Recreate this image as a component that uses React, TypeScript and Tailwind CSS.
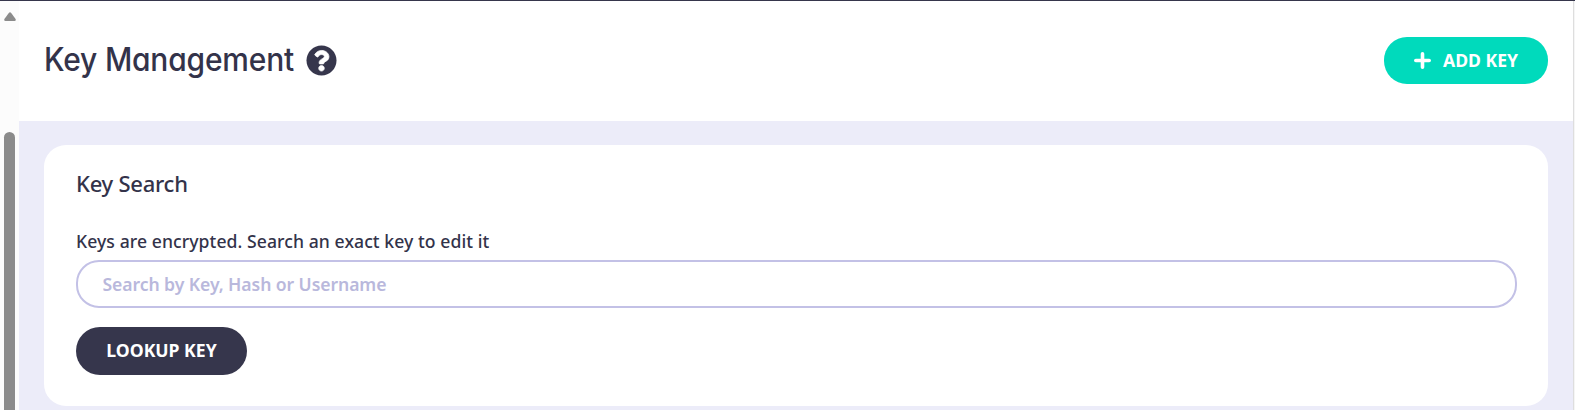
import React from "react";

function Scrollbar() {
  return (
    <div className="flex w-[19px] shrink-0 flex-col items-center bg-[#fcfcfc] pt-[11px]">
      <svg width="12" height="9" viewBox="0 0 12 9" className="shrink-0">
        <path d="M4.8 1Q6-.6 7.2 1L11.6 7Q12.2 9 10.6 9H1.4Q-.2 9 .4 7Z" fill="#8b8b8b" />
      </svg>
      <div className="mt-[111px] w-[11px] flex-1 rounded-t-full bg-[#8b8b8b]" />
    </div>
  );
}

function HelpIcon() {
  return (
    <svg width="31" height="31" viewBox="0 0 512 512" className="shrink-0">
      <path
        fill="#36364c"
        d="M504 256c0 136.997-111.043 248-248 248S8 392.997 8 256C8 119.083 119.043 8 256 8s248 111.083 248 248z"
      />
      <path
        fill="#fff"
        stroke="#fff"
        strokeWidth="12"
        d="M262.655 90c-54.497 0-89.255 22.957-116.549 63.758-3.536 5.286-2.353 12.415 2.715 16.258l34.699 26.31c5.205 3.947 12.621 3.008 16.665-2.122 17.864-22.658 30.113-35.797 57.303-35.797 20.429 0 45.698 13.148 45.698 32.958 0 14.976-12.363 22.667-32.534 33.976C247.128 238.528 216 254.941 216 296v4c0 6.627 5.373 12 12 12h56c6.627 0 12-5.373 12-12v-1.333c0-28.462 83.186-29.647 83.186-106.667 0-58.002-60.165-102-116.531-102zM256 338c-25.365 0-46 20.635-46 46 0 25.364 20.635 46 46 46s46-20.636 46-46c0-25.365-20.635-46-46-46z"
      />
    </svg>
  );
}

function PlusIcon() {
  return (
    <svg width="17" height="17" viewBox="0 0 17 17" className="shrink-0">
      <path d="M8.5 1.8V15.2M1.8 8.5H15.2" stroke="#fff" strokeWidth="3.6" strokeLinecap="round" />
    </svg>
  );
}

export default function App() {
  return (
    <div className="flex h-[410px] w-full flex-col overflow-hidden border-t border-[#36364c] bg-white font-['Noto_Sans',sans-serif] text-[#33334a]">
      <div className="flex min-h-0 flex-1">
        <Scrollbar />
        <main className="flex min-w-0 flex-1 flex-col bg-[#ececf9]">
          <header className="flex h-[120px] shrink-0 items-center justify-between bg-white pr-[25px] pb-0.5 pl-[25px]">
            <div className="flex items-center gap-3">
              <h1 className="mb-px w-[250px] origin-left scale-x-[0.936] font-['Inter',sans-serif] text-[32px] leading-10 font-medium tracking-[-0.2px] whitespace-nowrap [font-feature-settings:'cv11']">
                Key Management
              </h1>
              <HelpIcon />
            </div>
            <button className="flex h-[47px] w-[164px] items-center gap-3 rounded-[23px] bg-[#00dabc] pl-[30px] text-[17.6px] font-bold whitespace-nowrap text-white">
              <PlusIcon />
              ADD KEY
            </button>
          </header>
          <section className="mx-[25px] mt-6 flex h-[261px] flex-col rounded-[22px] bg-white px-8 pt-[23px]">
            <h2 className="text-[22px] leading-[30px] font-medium tracking-[-0.25px]">Key Search</h2>
            <label htmlFor="lookup" className="mt-[31px] text-[17.6px] leading-6 font-medium tracking-[0.07px]">
              Keys are encrypted. Search an exact key to edit it
            </label>
            <input
              id="lookup"
              placeholder="Search by Key, Hash or Username"
              className="mt-[7px] h-12 w-[1441px] shrink-0 rounded-[23px] border-2 border-[#c3c1e6] bg-white px-[24.5px] text-[17.6px] font-semibold tracking-[-0.08px] outline-none placeholder:text-[#b9b8dc] placeholder:opacity-100"
            />
            <button className="mt-[19px] h-12 w-[171px] shrink-0 rounded-3xl bg-[#36364c] pb-0.5 text-[17.6px] font-bold whitespace-nowrap text-white">
              LOOKUP KEY
            </button>
          </section>
        </main>
        <div className="w-0.5 shrink-0 border-l border-[#dedede] bg-[#f5f5f5]" />
      </div>
    </div>
  );
}
